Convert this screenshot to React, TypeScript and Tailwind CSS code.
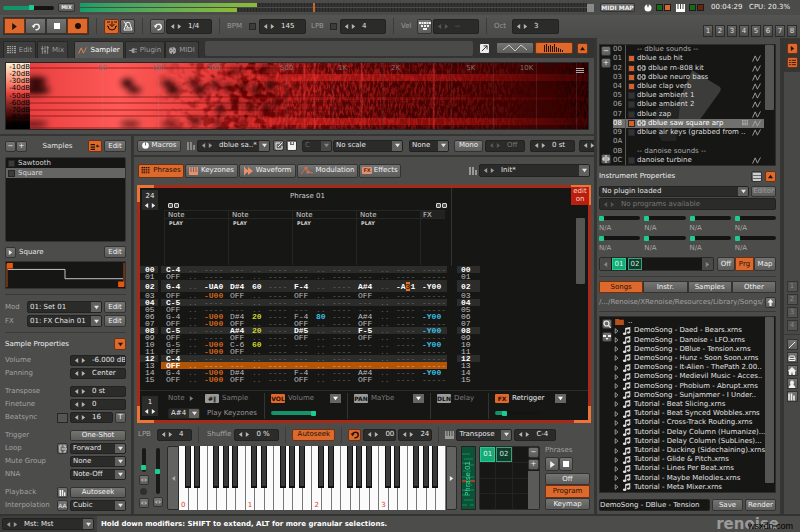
import type { ReactNode } from 'react';
import clsx, { type ClassValue } from 'clsx';
import { twMerge } from 'tailwind-merge';

function cn(...inputs: ClassValue[]) {
  return twMerge(clsx(inputs));
}

/* ---------- shared controls ---------- */

const box = 'border border-[#222] bg-[#2b2b2a] rounded-[2px] text-[#e6e6e6]';
const gray = 'bg-linear-to-b from-[#747473] to-[#5c5c5b] border border-[#333] text-[#f0f0f0]';
const orange = 'bg-[#dd6a2c] border border-[#6e3010] text-[#21130b]';

function Btn({
  children,
  className,
  on,
  label,
}: {
  children?: ReactNode;
  className?: string;
  on?: boolean;
  label?: string;
}) {
  return (
    <button
      aria-label={label}
      className={cn(
        'flex shrink-0 items-center justify-center overflow-hidden whitespace-nowrap rounded-[2px]',
        on ? orange : gray,
        className,
      )}
    >
      {children}
    </button>
  );
}

function Tri({ dir, className }: { dir: 'left' | 'right' | 'up' | 'down'; className?: string }) {
  const points = {
    left: '5,0 5,6 1,3',
    right: '1,0 1,6 5,3',
    up: '0,5 6,5 3,1',
    down: '0,1 6,1 3,5',
  };
  return (
    <svg viewBox="0 0 6 6" className={cn('h-[5px] w-[5px] shrink-0', className)} fill="currentColor">
      <polygon points={points[dir]} />
    </svg>
  );
}

function Spin({
  value,
  label,
  className,
  dim,
}: {
  value: string;
  label: string;
  className?: string;
  dim?: boolean;
}) {
  return (
    <div className={cn('flex shrink-0 items-center gap-[2px] overflow-hidden pl-[3px]', box, dim && 'text-[#777]', className)}>
      <button aria-label={`${label} down`} className={dim ? 'text-[#555]' : 'text-[#b5b5b5]'}>
        <Tri dir="left" />
      </button>
      <button aria-label={`${label} up`} className={dim ? 'text-[#555]' : 'text-[#b5b5b5]'}>
        <Tri dir="right" />
      </button>
      <input aria-label={label} defaultValue={value} className="ml-1 w-0 min-w-0 flex-1 bg-transparent outline-none" />
    </div>
  );
}

function Select({
  value,
  label,
  className,
  dim,
  arrows,
}: {
  value: string;
  label: string;
  className?: string;
  dim?: boolean;
  arrows?: boolean;
}) {
  return (
    <div className={cn('relative flex shrink-0 items-center overflow-hidden', box, dim && 'text-[#666]', className)}>
      {arrows && (
        <span className="flex gap-[2px] pl-[3px] text-[#999]">
          <Tri dir="left" />
          <Tri dir="right" />
        </span>
      )}
      <select
        aria-label={label}
        className={cn('h-full w-0 flex-1 appearance-none bg-transparent pl-[2px] pr-[11px] outline-none', arrows && 'pl-[6px]')}
      >
        <option>{value}</option>
      </select>
      <span
        className={cn(
          'pointer-events-none absolute inset-y-0 right-0 flex w-[10px] items-center justify-center bg-[#60605f]',
          dim && 'bg-[#484847] text-[#888]',
        )}
      >
        <Tri dir="down" />
      </span>
    </div>
  );
}

function Slider({ value, label, className }: { value: number; label: string; className?: string }) {
  return (
    <input
      type="range"
      aria-label={label}
      defaultValue={value}
      style={{ background: `linear-gradient(to right, #15936a ${value}%, #141414 ${value}%)` }}
      className={cn(
        'h-[4px] min-w-0 appearance-none rounded-[2px] [&::-webkit-slider-thumb]:h-[5px] [&::-webkit-slider-thumb]:w-[5px] [&::-webkit-slider-thumb]:appearance-none [&::-webkit-slider-thumb]:rounded-[1px] [&::-webkit-slider-thumb]:bg-[#1dcc95]',
        className,
      )}
    />
  );
}

function VSlider({ value, label, className }: { value: number; label: string; className?: string }) {
  return (
    <input
      type="range"
      aria-label={label}
      defaultValue={value}
      className={cn(
        'w-[4px] appearance-none rounded-[2px] bg-[#191919] [direction:rtl] [writing-mode:vertical-lr] [&::-webkit-slider-thumb]:h-[5px] [&::-webkit-slider-thumb]:w-[5px] [&::-webkit-slider-thumb]:appearance-none [&::-webkit-slider-thumb]:rounded-[1px] [&::-webkit-slider-thumb]:bg-[#1dcc95]',
        className,
      )}
    />
  );
}

function Check({ label, className }: { label: string; className?: string }) {
  return (
    <input
      type="checkbox"
      aria-label={label}
      className={cn('h-[7px] w-[7px] shrink-0 appearance-none border border-[#262626] bg-[#3c3c3b]', className)}
    />
  );
}

function Sep() {
  return <div className="h-[16px] w-px shrink-0 bg-[#3b3b3a]" />;
}

/* ---------- icons ---------- */

function LoopIcon({ className }: { className?: string }) {
  return (
    <svg viewBox="0 0 10 10" className={cn('h-[9px] w-[9px]', className)} fill="none" stroke="currentColor" strokeWidth="1.6">
      <path d="M5 8.600H6.200A2.800 2.800 0 0 0 6 2.400C4.600 2.400 3.300 3.100 2.800 4.600" />
      <path d="M0.600 4L2.900 7L5 4Z" fill="currentColor" stroke="none" />
    </svg>
  );
}

function Bars({ className }: { className?: string }) {
  return (
    <svg viewBox="0 0 8 8" className={cn('h-[8px] w-[8px] shrink-0', className)} fill="currentColor">
      <path d="M0 0h2v8H0zM3 0h2v8H3zM6 3h2v5H6z" />
    </svg>
  );
}

function KeysIcon({ className }: { className?: string }) {
  return (
    <svg viewBox="0 0 9 8" className={cn('h-[8px] w-[9px] shrink-0', className)} fill="currentColor">
      <path d="M0 0h1.500v5h1V0h1.500v5h1V0h1.500v5h1V0H9v8H0z" />
    </svg>
  );
}

function GridIcon({ className }: { className?: string }) {
  return (
    <svg viewBox="0 0 9 8" className={cn('h-[8px] w-[9px] shrink-0', className)} fill="currentColor">
      {[0, 2, 4, 6].map((y) => (
        <path key={y} d={`M0 ${y}h2v1.200H0zM2.500 ${y}h1.500v1.200H2.500zM4.700 ${y}h1.500v1.200H4.700zM7 ${y}h2v1.200H7z`} />
      ))}
    </svg>
  );
}

function WaveIcon({ className }: { className?: string }) {
  return (
    <svg viewBox="0 0 10 8" className={cn('h-[7px] w-[9px] shrink-0', className)} fill="none" stroke="currentColor">
      <path d="M0.500 7.500L3.500 1L6 7L9.500 0.500" />
    </svg>
  );
}

function NoteIcon() {
  return (
    <svg viewBox="0 0 9 9" className="h-[8px] w-[9px] shrink-0" fill="currentColor">
      <path d="M3 1.200L8.800 0V2L4.200 3V7.500H3zM7.600 1H8.800V6.500H7.600z" />
      <ellipse cx="2.400" cy="7.500" rx="2" ry="1.400" />
      <ellipse cx="6.800" cy="6.300" rx="1.800" ry="1.300" />
    </svg>
  );
}

/* ---------- top bars ---------- */

function Meter({ className }: { className: string }) {
  return (
    <div className="h-[4px] bg-[repeating-linear-gradient(to_right,#333_0_2px,#292929_2px_3px)]">
      <div className={cn('h-full bg-linear-to-r from-[#0f9f67] to-[#8bbb35]', className)} />
    </div>
  );
}

function TopBar() {
  return (
    <div className="flex h-[15px] items-center bg-[#4b4b4a] px-[3px]">
      <Slider label="Main volume" value={56} className="w-[51px]" />
      <Btn className="ml-1 h-[9px] w-[17px] text-[5px] font-bold">MIX</Btn>
      <div className="relative ml-[5px] flex flex-1 flex-col gap-px">
        <Meter className="w-[35%]" />
        <Meter className="w-[31%]" />
        <div className="absolute inset-y-0 left-[46%] w-[2px] bg-[#c8642c]" />
      </div>
      <div className="h-[8px] w-[7px] bg-[#8a8a89]" />
      <Btn className="ml-[6px] h-[9px] w-[35px] text-[6px] font-bold">MIDI MAP</Btn>
      <svg viewBox="0 0 8 8" className="ml-[9px] h-[8px] w-[8px] text-white" fill="currentColor">
        <circle cx="4" cy="4" r="3.500" />
        <path d="M4 4L3 0.500H5Z" fill="#333" />
      </svg>
      <span className="ml-1 h-[7px] w-[7px] border border-[#1c1c1c] bg-[#176b17]" />
      <span className="ml-px h-[7px] w-[7px] border border-[#1c1c1c] bg-[#dd662c]" />
      <KeysIcon className="ml-[5px] text-white" />
      <span className="ml-1 h-[7px] w-[7px] border border-[#1c1c1c] bg-[#176b17]" />
      <span className="ml-px h-[7px] w-[7px] border border-[#1c1c1c] bg-[#6b2412]" />
      <span className="ml-[7px] w-[38px] text-[#eee]">00:04:29</span>
      <span className="w-[48px] whitespace-nowrap text-[#eee]">CPU: 20.3%</span>
    </div>
  );
}

function Transport() {
  return (
    <div className="flex h-[23px] items-center bg-linear-to-b from-[#545453] to-[#4a4a49] px-[3px] pb-px text-[#9b9b9b]">
      <div className="flex h-[18px] border border-[#333]">
        <Btn label="Play" on className="w-[21px] rounded-none">
          <Tri dir="right" className="h-[7px] w-[7px]" />
        </Btn>
        <Btn label="Loop pattern" className="w-[21px] rounded-none">
          <LoopIcon />
        </Btn>
        <Btn label="Stop" className="w-[21px] rounded-none">
          <span className="h-[6px] w-[6px] bg-white" />
        </Btn>
        <Btn label="Record" on className="w-[21px] rounded-none">
          <span className="h-[6px] w-[6px] rounded-full bg-[#1b0f08]" />
        </Btn>
      </div>
      <div className="ml-[7px] flex items-center gap-[7px]">
        <Sep />
        <div className="flex gap-px">
          <Btn label="Follow" on className="h-[15px] w-[15px]">
            <svg viewBox="0 0 10 10" className="h-[10px] w-[10px]" fill="none" stroke="currentColor">
              <path d="M5 0V5M2.500 3L5 5.500L7.500 3M1 5Q1 9 5 9Q9 9 9 5M0 5L2 6M10 5L8 6M0 1H3M7 1H10" />
            </svg>
          </Btn>
          <Btn label="Metronome" className="h-[15px] w-[15px]">
            <svg viewBox="0 0 10 10" className="h-[10px] w-[10px]" fill="none" stroke="currentColor">
              <path d="M3.500 1.500H6.500L9 9H1ZM5.500 7L1 0.500M3 7H8" />
            </svg>
          </Btn>
        </div>
        <Sep />
        <div className="flex gap-px">
          <Btn label="Block loop" className="h-[15px] w-[15px]">
            <LoopIcon />
          </Btn>
          <Spin label="Block size" value="1/4" className="h-[15px] w-[46px]" />
        </div>
        <Sep />
        <div className="flex items-center">
          <span className="w-[22px]">BPM</span>
          <Check label="BPM lock" />
          <Spin label="BPM" value="145" className="ml-[3px] h-[15px] w-[47px]" />
          <span className="ml-[5px] w-[19px]">LPB</span>
          <Check label="LPB lock" />
          <Spin label="LPB" value="4" className="ml-[3px] h-[15px] w-[46px]" />
        </div>
        <Sep />
        <div className="flex items-center">
          <span className="w-[16px]">Vel</span>
          <Btn label="Velocity keyboard" className="h-[15px] w-[15px]">
            <svg viewBox="0 0 12 9" className="h-[9px] w-[12px]" fill="currentColor">
              <path d="M0 0h2v2H0zM2.500 0h2v2h-2zM5 0h2v2H5zM7.500 0h2v2h-2zM10 0h2v2h-2zM2 3h2v2H2zM5 3h2v2H5zM8 3h2v2H8zM4 6h4v2H4z" />
            </svg>
          </Btn>
          <Spin label="Velocity" value="--" dim className="ml-px h-[15px] w-[46px]" />
        </div>
        <Sep />
        <div className="flex items-center">
          <span className="w-[18px]">Oct</span>
          <Spin label="Octave" value="3" className="h-[15px] w-[47px]" />
        </div>
      </div>
      <div className="ml-auto flex gap-[2px] self-end">
        {[1, 2, 3, 4, 5, 6, 7, 8].map((n) => (
          <button
            key={n}
            className="h-[12px] w-[10px] border border-[#2c2c2c] bg-linear-to-b from-[#656564] to-[#4a4a49] leading-[10px] text-[#ddd]"
          >
            {n}
          </button>
        ))}
      </div>
    </div>
  );
}

function ModeTabs() {
  const tab = 'flex h-[17px] items-center justify-center gap-[3px] rounded-t-[2px] border border-[#262626] border-b-0';
  const idle = 'bg-[#3e3e3d] text-[#9c9c9c]';
  return (
    <div className="flex h-[20px] items-end bg-[#333332] px-[3px]">
      <button className={cn(tab, idle, 'w-[33px]')}>
        <GridIcon />
        Edit
      </button>
      <button className={cn(tab, idle, 'ml-px w-[31px]')}>
        <svg viewBox="0 0 9 9" className="h-[8px] w-[8px]" stroke="currentColor">
          <path d="M1.500 0V9M4.500 0V9M7.500 0V9M0 3H3M3 6H6M6 2H9" />
        </svg>
        Mix
      </button>
      <button className={cn(tab, 'ml-[6px] w-[50px] bg-[#5a5a59] text-white')}>
        <WaveIcon className="text-[#e98a62]" />
        Sampler
      </button>
      <button className={cn(tab, idle, 'ml-px w-[40px]')}>
        <svg viewBox="0 0 9 8" className="h-[7px] w-[8px]" fill="currentColor">
          <path d="M0 3.500H2.500Q3 1 6 1V0.500L6 2H9V3H6V5H9V6H6V7Q3 7 2.500 4.500H0z" />
        </svg>
        Plugin
      </button>
      <button className={cn(tab, idle, 'w-[34px]')}>
        <svg viewBox="0 0 8 8" className="h-[7px] w-[7px]">
          <circle cx="4" cy="4" r="4" fill="#a8a8a8" />
          <path d="M1.500 4h1M5.500 4h1M3.500 2h1M3.500 0v1.500M4 6v2" stroke="#333" />
        </svg>
        MIDI
      </button>
      <div className="mb-[2px] ml-[6px] h-[15px] flex-1 rounded-[2px] bg-[#4a4a49]" />
      <div className="mb-[4px] ml-[6px] flex items-center">
        <Btn label="Detach" className="h-[11px] w-[11px] bg-none bg-[#eee] text-[#222]">
          <svg viewBox="0 0 8 8" className="h-[7px] w-[7px]" fill="none" stroke="currentColor">
            <path d="M1 7L7 1M3 1H7V5" />
          </svg>
        </Btn>
        <Btn label="Scope view" className="ml-[6px] h-[12px] w-[38px] text-[#ccc]">
          <svg viewBox="0 0 24 8" className="h-[8px] w-[24px]" fill="none" stroke="currentColor">
            <path d="M0 6L6 1L12 7L18 1L24 6" />
          </svg>
        </Btn>
        <Btn label="Spectrum view" on className="ml-px h-[12px] w-[38px]">
          <svg viewBox="0 0 20 8" className="h-[8px] w-[20px]" fill="currentColor">
            <path d="M0 1h1v7H0zM2 0h1v8H2zM4 2h1v6H4zM6 1h1v7H6zM8 2h1v6H8zM10 0h1v8h-1zM12 3h1v5h-1zM14 4h1v4h-1zM16 5h1v3h-1zM18 6h1v2h-1z" />
          </svg>
        </Btn>
        <Btn label="Collapse" on className="ml-1 mr-[3px] h-[11px] w-[11px]">
          <Tri dir="up" />
        </Btn>
      </div>
    </div>
  );
}

/* ---------- spectrum ---------- */

const freqs = [
  { label: '50', at: 13 },
  { label: '100', at: 23 },
  { label: '200', at: 33 },
  { label: '500', at: 46 },
  { label: '1K', at: 56 },
  { label: '2K', at: 65.5 },
  { label: '5K', at: 79 },
  { label: '10K', at: 89 },
];

// dark spots between the partials: cx, cy, rx, ry
const blobs = [
  [6, 18, 11, 4], [6, 27, 14, 4], [97, 20, 6, 4], [104, 27, 7, 3], [137, 20, 6, 3], [143, 27, 7, 4], [163, 20, 5, 3],
  [170, 27, 6, 4], [185, 22, 4, 4], [198, 25, 4, 4], [212, 24, 4, 4], [226, 27, 4, 5], [240, 22, 4, 6],
  [4, 61, 14, 2], [100, 61, 10, 2], [140, 61, 9, 2], [165, 58, 6, 3], [190, 46, 5, 4], [205, 40, 4, 4],
  [220, 44, 4, 4], [236, 46, 4, 5], [246, 38, 4, 3], [188, 60, 5, 3], [212, 60, 5, 3], [235, 6, 8, 2], [205, 9, 8, 2],
];

function Spectrum() {
  return (
    <div className="bg-[#4c4c4b] px-[5px] py-1">
      <div className="flex border border-[#262626]">
        <div className="flex w-[24px] flex-col justify-between bg-linear-to-b from-[#fff0d4] via-[#e84540] via-45% to-black py-px text-right leading-[7px] text-black">
          {[10, 20, 30, 40, 50, 60, 70, 80, 90].map((db) => (
            <span key={db}>-{db}dB</span>
          ))}
        </div>
        <div className="relative h-[66px] flex-1 overflow-hidden bg-black">
          <svg viewBox="0 0 557 66" preserveAspectRatio="none" className="h-full w-full">
            <defs>
              <linearGradient id="base">
                <stop offset="0" stopColor="#e84040" />
                <stop offset="0.160" stopColor="#ff5a57" />
                <stop offset="0.350" stopColor="#e23836" />
                <stop offset="0.500" stopColor="#c8201e" />
                <stop offset="0.750" stopColor="#b01614" />
                <stop offset="1" stopColor="#7a0c0a" />
              </linearGradient>
              <linearGradient id="fadeMid">
                <stop offset="0.220" stopColor="#000" />
                <stop offset="0.400" stopColor="#fff" />
                <stop offset="0.500" stopColor="#555" />
                <stop offset="1" stopColor="#222" />
              </linearGradient>
              <linearGradient id="fadeHigh">
                <stop offset="0.350" stopColor="#000" />
                <stop offset="0.550" stopColor="#bbb" />
                <stop offset="0.800" stopColor="#fff" />
              </linearGradient>
              <linearGradient id="dark">
                <stop offset="0.400" stopColor="#000" stopOpacity="0" />
                <stop offset="0.600" stopColor="#000" stopOpacity="0.200" />
                <stop offset="0.850" stopColor="#000" stopOpacity="0.450" />
                <stop offset="1" stopColor="#000" stopOpacity="0.800" />
              </linearGradient>
              <linearGradient id="band">
                <stop offset="0.300" stopColor="#f02a26" stopOpacity="0" />
                <stop offset="0.500" stopColor="#f02a26" stopOpacity="0.500" />
                <stop offset="0.800" stopColor="#e01a16" stopOpacity="0.350" />
                <stop offset="1" stopColor="#c01010" stopOpacity="0.100" />
              </linearGradient>
              <mask id="midMask">
                <rect width="557" height="66" fill="url(#fadeMid)" />
              </mask>
              <mask id="highMask">
                <rect width="557" height="66" fill="url(#fadeHigh)" />
              </mask>
              <filter id="soft">
                <feGaussianBlur stdDeviation="3" />
              </filter>
              <filter id="cells" x="0" y="0" width="1" height="1">
                <feTurbulence type="fractalNoise" baseFrequency="0.110 0.130" numOctaves="2" seed="4" />
                <feColorMatrix values="0 0 0 0 0.120  0 0 0 0 0  0 0 0 0 0  5 0 0 0 -2.300" />
              </filter>
              <filter id="grain" x="0" y="0" width="1" height="1">
                <feTurbulence type="fractalNoise" baseFrequency="0.450 0.160" numOctaves="3" seed="9" />
                <feColorMatrix values="0 0 0 0 0.050  0 0 0 0 0  0 0 0 0 0  5 0 0 0 -1.900" />
              </filter>
            </defs>
            <rect width="557" height="66" fill="url(#base)" />
            {[4, 33, 39, 46, 52, 64].map((y) => (
              <rect key={y} y={y} width="557" height="2" fill="#7a0c0c" opacity="0.350" />
            ))}
            <g filter="url(#soft)" fill="#160000">
              {blobs.map(([cx, cy, rx, ry], i) => (
                <ellipse key={i} cx={cx} cy={cy} rx={rx} ry={ry} />
              ))}
            </g>
            <g mask="url(#midMask)">
              <rect width="557" height="66" filter="url(#cells)" />
            </g>
            <rect width="557" height="66" fill="url(#dark)" />
            <g mask="url(#highMask)">
              <rect width="557" height="66" filter="url(#grain)" />
            </g>
            <rect y="11" width="557" height="7" fill="url(#band)" />
            <rect y="34" width="557" height="3" fill="url(#band)" opacity="0.500" />
            <rect y="55" width="557" height="7" fill="url(#band)" />
            {[273, 283, 330, 402].map((x) => (
              <rect key={x} x={x} width="2" height="66" fill="#ff4a44" opacity="0.300" />
            ))}
            {[72, 128, 256, 302, 352, 420, 462, 505, 545].map((x) => (
              <rect key={x} x={x} width="1" height="66" fill="#aaa" opacity="0.150" />
            ))}
          </svg>
          {freqs.map(({ label, at }) => (
            <span key={label} className="absolute top-px -translate-x-1/2 text-[#7c7272]" style={{ left: `${at}%` }}>
              {label}
            </span>
          ))}
          <button aria-label="Spectrum options" className="absolute right-[4px] top-[5px] flex flex-col gap-px">
            <span className="h-px w-[8px] bg-[#aaa]" />
            <span className="h-px w-[8px] bg-[#aaa]" />
            <span className="h-px w-[8px] bg-[#aaa]" />
          </button>
        </div>
      </div>
    </div>
  );
}

/* ---------- samples panel ---------- */

function Prop({ label, children }: { label: string; children: ReactNode }) {
  return (
    <div className="flex h-[11px] items-center justify-between">
      <span className="text-[#a2a2a2]">{label}</span>
      <div className="flex items-center gap-[2px]">{children}</div>
    </div>
  );
}

function SamplesPanel() {
  const field = 'h-[11px] w-[56px]';
  return (
    <aside className="flex w-[131px] shrink-0 flex-col bg-[#4c4c4b] px-[5px] pt-1">
      <div className="flex h-[12px] items-center">
        <Btn label="Remove sample" className="h-[11px] w-[11px]">−</Btn>
        <Btn label="Add sample" className="h-[11px] w-[11px]">+</Btn>
        <span className="flex-1 text-center text-[#e4e4e4]">Samples</span>
        <Btn label="Drumkit" on className="h-[12px] w-[14px]">
          <svg viewBox="0 0 10 8" className="h-[7px] w-[10px]" fill="currentColor">
            <path d="M0 1h5v1.500H0zM0 4h5v1.500H0zM0 6.500h5V8H0zM6 3.500L8 1.500V3h2v1.200H8V5.500z" />
          </svg>
        </Btn>
        <Btn className="ml-[2px] h-[12px] w-[22px]">Edit</Btn>
      </div>
      <ul className="mt-[5px] h-[85px] rounded-[2px] border border-[#333] bg-[#161615] text-[#d6d6d6]">
        <li className="flex h-[10px] items-center gap-[3px] px-[2px]">
          <Check label="Mute Sawtooth" />
          Sawtooth
        </li>
        <li className="flex h-[10px] items-center gap-[3px] bg-[#656564] px-[2px]">
          <Check label="Mute Square" />
          Square
        </li>
      </ul>
      <div className="mt-1 flex h-[12px] items-center">
        <Btn label="Play sample" className="h-[11px] w-[11px]">
          <Tri dir="right" />
        </Btn>
        <span className="flex-1 pl-[3px] text-[#e4e4e4]">Square</span>
        <Btn className="h-[12px] w-[22px]">Edit</Btn>
      </div>
      <svg viewBox="0 0 121 28" preserveAspectRatio="none" className="mt-[3px] h-[28px] w-full border border-[#333] bg-[#161615]" fill="none">
        <path d="M1.500 8H60V18H119" stroke="#ccc" />
        <path d="M1 2V27M120 1V26" stroke="#c4501a" />
        <path d="M1 1h6v6H1zM114 21h6v6h-6z" fill="#e8560c" />
      </svg>
      <div className="mt-[5px] h-px bg-[#3a3a39]" />
      <div className="mt-[6px] flex h-[12px] items-center gap-[2px]">
        <span className="flex-1 text-[#a2a2a2]">Mod</span>
        <Select label="Modulation set" value="01: Set 01" className="h-[12px] w-[75px]" />
        <Btn className="h-[12px] w-[22px]">Edit</Btn>
      </div>
      <div className="mt-[2px] flex h-[12px] items-center gap-[2px]">
        <span className="flex-1 text-[#a2a2a2]">FX</span>
        <Select label="FX chain" value="01: FX Chain 01" className="h-[12px] w-[75px]" />
        <Btn className="h-[12px] w-[22px]">Edit</Btn>
      </div>
      <div className="mt-[5px] h-px bg-[#3a3a39]" />
      <div className="mt-[5px] flex h-[12px] items-center justify-between">
        <h2 className="text-[#eee]">Sample Properties</h2>
        <Btn label="Collapse sample properties" on className="h-[12px] w-[12px]">
          <Tri dir="down" />
        </Btn>
      </div>
      <div className="mt-[5px] flex flex-col gap-[7px]">
        <div className="flex flex-col gap-[2px]">
          <Prop label="Volume"><Spin label="Volume" value="-6.000 dB" className={field} /></Prop>
          <Prop label="Panning"><Spin label="Panning" value="Center" className={field} /></Prop>
        </div>
        <div className="flex flex-col gap-[2px]">
          <Prop label="Transpose"><Spin label="Transpose" value="0 st" className={field} /></Prop>
          <Prop label="Finetune"><Spin label="Finetune" value="0" className={field} /></Prop>
          <Prop label="Beatsync">
            <Check label="Beatsync on" className="h-[10px] w-[11px] bg-[#555]" />
            <Spin label="Beatsync" value="16" className="h-[11px] w-[43px]" />
            <Btn className="h-[11px] w-[11px]">T</Btn>
          </Prop>
        </div>
        <div className="flex flex-col gap-[2px]">
          <Prop label="Trigger"><Btn className={field}>One-Shot</Btn></Prop>
          <Prop label="Loop">
            <Btn label="Loop release" className="h-[11px] w-[11px]">
              <svg viewBox="0 0 9 9" className="h-[8px] w-[8px]" fill="none" stroke="currentColor">
                <path d="M3 1H1V8H3M5 1H7V3M5 8H7V6M3 4.500H9" />
              </svg>
            </Btn>
            <Select label="Loop" value="Forward" className={field} />
          </Prop>
          <Prop label="Mute Group"><Select label="Mute group" value="None" className={field} /></Prop>
          <Prop label="NNA"><Select label="NNA" value="Note-Off" className={field} /></Prop>
        </div>
        <div className="flex flex-col gap-[2px]">
          <Prop label="Playback">
            <Btn label="Oversampling" className="h-[11px] w-[11px]"><Bars className="h-[6px] w-[7px]" /></Btn>
            <Btn className={field}>Autoseek</Btn>
          </Prop>
          <Prop label="Interpolation">
            <Btn className="h-[11px] w-[11px] text-[6px]">AA</Btn>
            <Select label="Interpolation" value="Cubic" className={field} />
          </Prop>
        </div>
      </div>
    </aside>
  );
}

/* ---------- phrase editor ---------- */

type Cell = [note?: string, vol?: string, fx?: string];
type Line = { cells: Cell[]; fx?: string };

const lines: Line[] = [
  { cells: [['C-4'], [], [], []] },
  { cells: [['OFF'], [], [], []] },
  { cells: [['G-4', '', '-UA0'], ['D#4', '60'], ['F-4'], ['A#4', '', '-A31']], fx: '-Y00' },
  { cells: [['OFF', '', '-U00'], ['OFF'], ['OFF'], ['OFF']] },
  { cells: [['C-5'], [], [], []] },
  { cells: [['OFF'], [], [], []] },
  { cells: [['G-4', '', '-U00'], ['D#4', '20'], ['F-4', '80'], ['A#4']], fx: '-Y00' },
  { cells: [['OFF', '', '-U00'], ['OFF'], ['OFF'], ['OFF']] },
  { cells: [['C-5'], ['A#4', '20'], ['D#5'], ['F-5']], fx: '-Y00' },
  { cells: [['OFF'], ['OFF'], ['OFF'], ['OFF']] },
  { cells: [['G-5', '', '-U00'], ['C-6', '60'], [], []], fx: '-Y00' },
  { cells: [['OFF', '', '-U00'], ['OFF'], [], []] },
  { cells: [['C-4'], [], [], []] },
  { cells: [['OFF'], [], [], []] },
  { cells: [['G-4', '', '-U00'], ['D#4'], ['F-4'], ['A#4']], fx: '-Y00' },
  { cells: [['OFF', '', '-U00'], ['OFF'], ['OFF'], ['OFF']] },
];

const CURRENT = 2;
const PLAYING = 13;

function PatternLine({ line, index }: { line: Line; index: number }) {
  const beat = index % 4 === 0;
  const current = index === CURRENT;
  const playing = index === PLAYING;
  const strong = beat || current;
  const num = String(index).padStart(2, '0');
  const empty = playing ? 'font-normal text-[#e0a878]' : 'font-normal text-[#666665]';
  const noteColor = strong || playing ? 'font-bold text-white' : 'text-[#bcbcbb]';
  const numCell = cn('p-0', strong ? 'bg-[#2c2c2b] font-bold text-white' : 'text-[#c0c0c0]');
  const gap = cn('p-0', (strong || playing) && 'bg-[#161615]');
  return (
    <tr className={cn('h-[7px]', current && 'h-[12px] bg-[#2a2a29]', beat && 'bg-[#2c2c2b]', playing && 'bg-[#b35505]')}>
      <td className={cn(numCell, 'pl-[5px]', playing && 'bg-[#161615]')}>{num}</td>
      <td className={gap} />
      <td className="p-0" />
      {line.cells.map(([note, vol, fx], i) => (
        <PatternCell
          key={i}
          note={note}
          vol={vol}
          fx={fx}
          empty={empty}
          noteColor={noteColor}
          current={current}
          volColor={current ? 'text-white' : i === 2 ? 'text-[#3cc0e4]' : 'text-[#d2d22c]'}
        />
      ))}
      <td className={cn('p-0', line.fx ? (current ? 'font-bold text-white' : 'font-bold text-[#3cc0e4]') : empty)}>
        {line.fx ?? '-----'}
      </td>
      <td className={gap} />
      <td className={cn(numCell, 'pl-1', playing && 'bg-[#161615]')}>{num}</td>
    </tr>
  );
}

function PatternCell({
  note,
  vol,
  fx,
  empty,
  noteColor,
  current,
  volColor,
}: {
  note?: string;
  vol?: string;
  fx?: string;
  empty: string;
  noteColor: string;
  current: boolean;
  volColor: string;
}) {
  return (
    <>
      <td className={cn('p-0', note ? noteColor : empty)}>{note ?? '---'}</td>
      <td className={cn('p-0', vol ? ['font-bold', volColor] : empty)}>{vol || '..'}</td>
      <td className={cn('p-0', fx ? ['font-bold', current ? 'text-white' : 'text-[#d0641e]'] : empty)}>
        {fx === '-A31' ? (
          <>
            -A<span className="bg-[#e87428] text-[#402008]">3</span>1
          </>
        ) : (
          (fx ?? '----')
        )}
      </td>
    </>
  );
}

function PatternCols() {
  return (
    <>
      <col className="w-[22px]" />
      <col className="w-[16px]" />
      <col className="w-[26px]" />
    </>
  );
}

function LinkToggle() {
  return (
    <span className="flex gap-px">
      <span className="h-[5px] w-[5px] rounded-[1px] border border-[#d8d8d8] bg-[#555]" />
      <span className="h-[5px] w-[5px] rounded-[1px] border border-[#d8d8d8] bg-[#555]" />
    </span>
  );
}

function CountBox({ value, label }: { value: string; label: string }) {
  return (
    <div className="flex h-[20px] w-[16px] flex-col items-center justify-between bg-[#2b2b2a] py-[2px] text-[#eee]">
      <span>{value}</span>
      <div className="flex gap-[2px]">
        <button aria-label={`${label} down`}><Tri dir="left" /></button>
        <button aria-label={`${label} up`}><Tri dir="right" /></button>
      </div>
    </div>
  );
}

function Chip({ children, on }: { children: ReactNode; on?: boolean }) {
  return (
    <button
      className={cn(
        'h-[9px] w-[14px] rounded-[1px] text-center text-[6px] font-bold leading-[9px]',
        on ? 'bg-[#e0682a] text-[#2a1006]' : 'bg-[#9a9a99] text-[#111]',
      )}
    >
      {children}
    </button>
  );
}

function DropBtn({ label }: { label: string }) {
  return (
    <button aria-label={label} className="ml-auto flex h-[9px] w-[11px] items-center justify-center bg-[#656564] text-white">
      <Tri dir="down" />
    </button>
  );
}

function PhraseEditor() {
  const fxCol = 'flex h-[26px] flex-col justify-between border-r border-[#333] px-[6px]';
  const fxHead = 'flex h-[11px] items-center gap-[3px]';
  return (
    <section className="relative mx-[3px] h-[238px] border-[3px] border-[#a72a17] bg-[#161615]">
      {/* bright corner brackets over the frame */}
      <span className="absolute -left-[3px] -top-[3px] h-[17px] w-[17px] border-l-[3px] border-t-[3px] border-[#ee7436]" />
      <span className="absolute -bottom-[3px] -left-[3px] h-[17px] w-[17px] border-b-[3px] border-l-[3px] border-[#ee7436]" />
      <span className="absolute -bottom-[3px] -right-[3px] h-[17px] w-[17px] border-b-[3px] border-r-[3px] border-[#ee7436]" />
      <span className="absolute -right-[3px] -top-[3px] z-10 h-[20px] w-[20px] border-r-[2px] border-t-[2px] border-[#ee7436] bg-[#bb1e0c] text-center leading-[8px] text-[#f5d8d0]">
        edit
        <br />
        on
      </span>

      <div className="flex h-full flex-col">
        <div className="flex h-[78px]">
          <div className="w-[24px] shrink-0 pl-[2px] pt-[2px]">
            <CountBox label="Columns" value="24" />
          </div>
          <div className="w-[288px] border-r border-[#333]">
            <p className="pt-1 text-center text-[#d0d0d0]">Phrase 01</p>
            <div className="flex h-[9px] items-center justify-between px-1">
              <LinkToggle />
              <LinkToggle />
            </div>
            <div className="flex">
              {['Note', 'Note', 'Note', 'Note'].map((name, i) => (
                <div key={i} className="h-[55px] w-[64px] border-l border-[#242423] text-[#d0d0d0]">
                  <div className="h-[9px] border-y border-[#262625] pl-[3px] leading-[8px]">{name}</div>
                  <div className="pl-1 text-[5px] font-bold leading-[8px]">PLAY</div>
                </div>
              ))}
              <div className="h-[55px] flex-1 border-l border-[#242423] text-[#d0d0d0]">
                <div className="mr-[6px] h-[9px] border-y border-[#262625] bg-[#222] pl-[2px] leading-[8px]">FX</div>
              </div>
            </div>
          </div>
        </div>
        <table className="w-[340px] table-fixed [font-family:'Liberation_Mono',monospace] text-[8px] leading-[7px]">
          <colgroup>
            <col className="w-[18px]" />
            <col className="w-[3px]" />
            <col className="w-[5px]" />
            {[0, 1, 2, 3].map((i) => (
              <PatternCols key={i} />
            ))}
            <col className="w-[25px]" />
            <col className="w-[10px]" />
            <col className="w-[23px]" />
          </colgroup>
          <tbody>
            {lines.map((line, i) => (
              <PatternLine key={i} line={line} index={i} />
            ))}
          </tbody>
        </table>
        <div className="mt-auto flex h-[30px] items-center border-t border-[#2c2c2b] text-[#7c7c7b]">
          <div className="w-[22px] pl-[2px]">
            <CountBox label="Effect columns" value="1" />
          </div>
          <div className={cn(fxCol, 'w-[103px]')}>
            <div className={fxHead}>
              <span className="w-[18px]">Note</span>
              <Tri dir="right" />
              <span className="ml-[8px] flex"><Chip>#‖</Chip></span>
              Sample
            </div>
            <div className={fxHead}>
              <Select label="Base note" value="A#4" className="h-[11px] w-[32px]" />
              <span className="ml-1 whitespace-nowrap text-[#999]">Play Keyzones</span>
            </div>
          </div>
          <div className={cn(fxCol, 'w-[83px]')}>
            <div className={fxHead}>
              <Chip on>VOL</Chip>
              Volume
              <DropBtn label="Volume options" />
            </div>
            <div className={fxHead}><Slider label="Phrase volume" value={98} className="w-[46px]" /></div>
          </div>
          <div className={cn(fxCol, 'w-[83px]')}>
            <div className={fxHead}>
              <Chip>PAN</Chip>
              MaYbe
              <DropBtn label="Pan options" />
            </div>
          </div>
          <div className={cn(fxCol, 'w-[58px]')}>
            <div className={fxHead}>
              <Chip>DLN</Chip>
              Delay
            </div>
          </div>
          <div className="flex h-[26px] w-[83px] flex-col justify-between px-[6px]">
            <div className={cn(fxHead, 'text-[#eee]')}>
              <Chip on>FX</Chip>
              Retrigger
              <DropBtn label="FX options" />
            </div>
            <div className={fxHead}><Slider label="Retrigger amount" value={18} className="w-[46px]" /></div>
          </div>
        </div>
      </div>
      <div className="absolute right-[3px] top-[30px] h-[66px] w-[9px] rounded-[1px] bg-[#555554]" />
    </section>
  );
}

function InstrumentToolbar() {
  return (
    <div className="flex h-[21px] items-center overflow-hidden border-b-2 border-[#353534] pl-[3px]">
      <Btn className="h-[12px] w-[44px] gap-[3px]">
        <svg viewBox="0 0 8 8" className="h-[7px] w-[7px]">
          <circle cx="4" cy="4" r="3.800" fill="#fff" />
          <path d="M4 4V0.500" stroke="#555" />
        </svg>
        Macros
      </Btn>
      <Bars className="ml-[6px] mr-[2px] text-[#888]" />
      <Select label="Instrument preset" value="dblue sa..*" arrows className="h-[12px] w-[73px]" />
      <Btn label="Rename" className="ml-[3px] h-[11px] w-[11px]">
        <svg viewBox="0 0 8 8" className="h-[8px] w-[8px]" fill="none" stroke="currentColor">
          <path d="M5 1H1V7H7V4M3 5L7.500 0.500" />
        </svg>
      </Btn>
      <Btn label="Save preset" className="ml-[2px] h-[11px] w-[11px]">
        <svg viewBox="0 0 8 8" className="h-[8px] w-[8px]" fill="currentColor">
          <path d="M0 0h2v3h4V0h2v8H0zM3.500 0h1.500v2H3.500z" />
        </svg>
      </Btn>
      <Select label="Scale key" value="C" dim className="ml-[5px] h-[12px] w-[30px]" />
      <Select label="Scale" value="No scale" className="ml-px h-[12px] w-[70px]" />
      <Select label="Trigger options" value="None" className="ml-[6px] h-[12px] w-[40px]" />
      <Btn className="ml-[5px] h-[12px] w-[29px]">Mono</Btn>
      <Spin label="Glide" value="Off" dim className="ml-[2px] h-[12px] w-[40px]" />
      <Spin label="Transpose" value="0 st" className="ml-[5px] h-[12px] w-[45px]" />
      <Spin label="Volume" value="" className="ml-1 h-[12px] w-[45px]" />
    </div>
  );
}

function EditorTabs() {
  const icon = 'text-[#e8906c]';
  return (
    <div className="flex h-[28px] items-center px-[4px] pb-px">
      <div className="flex gap-px">
        <Btn on className="h-[14px] w-[46px] gap-[3px]">
          <GridIcon className="h-[7px]" />
          Phrases
        </Btn>
        <Btn className="h-[14px] w-[53px] gap-[3px]">
          <KeysIcon className={icon} />
          Keyzones
        </Btn>
        <Btn className="h-[14px] w-[57px] gap-[3px]">
          <svg viewBox="0 0 9 8" className={cn('h-[8px] w-[9px]', icon)} fill="currentColor">
            <path d="M0 0h1v8H0zM1 1L5 4L1 7zM4 0L9 4L4 8z" />
          </svg>
          Waveform
        </Btn>
        <Btn className="h-[14px] w-[61px] gap-[3px]">
          <svg viewBox="0 0 12 8" className="h-[8px] w-[12px] text-[#d07050]" fill="none" stroke="currentColor">
            <path d="M0 7L5 1L7 5L12 6" />
            <path d="M4 0h2v2H4zM6 4h2v2H6z" fill="currentColor" />
          </svg>
          Modulation
        </Btn>
        <Btn className="h-[14px] w-[42px] gap-[2px]">
          <span className="rounded-[1px] bg-[#e8906c] px-px text-[5px] font-bold leading-[7px] text-[#5a3020]">FX</span>
          Effects
        </Btn>
      </div>
      <Bars className="ml-auto mr-[2px] text-[#999]" />
      <Select label="Phrase preset" value="Init*" arrows className="h-[13px] w-[111px]" />
    </div>
  );
}

function PhraseControls() {
  return (
    <div className="flex h-[23px] items-center gap-[6px] px-1 text-[#a2a2a2]">
      <span className="flex items-center">
        <span className="w-[19px]">LPB</span>
        <Spin label="Phrase LPB" value="4" className="h-[12px] w-[35px]" />
      </span>
      <Sep />
      <span className="flex items-center gap-[3px] pl-[2px]">
        <span>Shuffle</span>
        <Spin label="Shuffle" value="0 %" className="h-[12px] w-[45px]" />
      </span>
      <Sep />
      <Btn on className="h-[12px] w-[43px]">Autoseek</Btn>
      <Sep />
      <span className="flex items-center gap-[2px]">
        <Btn label="Phrase loop" on className="h-[12px] w-[13px]"><LoopIcon /></Btn>
        <Spin label="Loop start" value="00" className="h-[12px] w-[33px]" />
        <Spin label="Loop end" value="24" className="h-[12px] w-[34px]" />
      </span>
      <Sep />
      <span className="flex items-center gap-[2px]">
        <KeysIcon className="text-[#999]" />
        <Select label="Key tracking" value="Transpose" className="h-[12px] w-[56px]" />
        <Spin label="Base note" value="C-4" className="h-[12px] w-[42px]" />
      </span>
    </div>
  );
}

/* ---------- keyboard ---------- */

function Piano() {
  return (
    <div className="flex min-w-0 flex-1 overflow-hidden bg-[#1a1a1a]">
      {Array.from({ length: 28 }, (_, i) => {
        const step = i % 7;
        return (
          <div key={i} className="relative h-full flex-1">
            <button
              aria-label={`White key ${i + 1}`}
              className="flex h-full w-full items-end border-r border-[#777] bg-[#fbfbfb] pl-[2px] text-[#e0412c]"
            >
              {step === 0 ? i / 7 : ''}
            </button>
            {step !== 2 && step !== 6 && (
              <button
                aria-label={`Black key ${i + 1}`}
                className="absolute -right-[2px] top-0 z-10 h-[42px] w-[6px] border-x border-b-2 border-[#111] bg-[#3a3a3a]"
              />
            )}
          </div>
        );
      })}
    </div>
  );
}

function SmallArrows() {
  return (
    <Btn label="Adjust" className="h-[10px] w-[10px] text-[#aaa]">
      <Tri dir="left" className="h-[4px] w-[4px]" />
      <Tri dir="right" className="h-[4px] w-[4px]" />
    </Btn>
  );
}

function KeyboardRow() {
  return (
    <div className="flex h-[64px] px-1">
      <div className="flex w-[29px] justify-between pr-[4px]">
        <div className="flex w-[11px] flex-col items-center gap-[3px] pt-[2px]">
          <VSlider label="Pitch bend" value={8} className="h-[24px]" />
          <SmallArrows />
          <span className="h-[7px] w-[7px] rounded-full bg-[#2f2f2e]" />
          <SmallArrows />
        </div>
        <div className="flex w-[11px] flex-col items-center justify-between pb-[3px] pt-[2px]">
          <VSlider label="Modulation wheel" value={50} className="h-[46px]" />
          <SmallArrows />
        </div>
      </div>
      <button aria-label="Octave down" className="flex w-[12px] items-center justify-center rounded-l-[2px] border border-[#2a2a2a] bg-[#626261] text-[#aaa]">
        <Tri dir="left" />
      </button>
      <Piano />
      <button aria-label="Octave up" className="flex w-[11px] items-center justify-center rounded-r-[2px] border border-[#2a2a2a] bg-[#626261] text-[#eee]">
        <Tri dir="right" />
      </button>
      <div className="relative ml-1 flex w-[15px] items-center justify-center border border-[#222] bg-[#0c5236]">
        <svg viewBox="0 0 13 62" preserveAspectRatio="none" className="absolute inset-0 h-full w-full">
          <path d="M0 7h8M2 12h9M0 16h3M6 18h6M1 24h8M0 30h12M4 38h6M0 43h12M0 48h4M2 53h9M0 58h5M8 58h4" stroke="#178a60" />
          <path d="M0 34h5M8 34h5" stroke="#c2451c" strokeWidth="1.500" />
        </svg>
        <span className="relative rotate-180 whitespace-nowrap text-[#3fe0a8] [writing-mode:vertical-rl]">Phrase 01</span>
      </div>
      <div className="ml-[3px] flex w-[61px] rounded-[2px] border border-[#2a2a2a] bg-[#1a1a19]">
        <div className="grid flex-1 grid-cols-3 grid-rows-4 gap-px bg-[#232322]">
          <button className="border border-[#1fcf8f] bg-[#1aa878] text-[#d8ffe8]">01</button>
          <button className="border border-[#3f9f7a] bg-[#103c2e] text-[#cfe8dc]">02</button>
          {Array.from({ length: 10 }, (_, i) => (
            <span key={i} className="bg-[#171716]" />
          ))}
        </div>
        <div className="flex w-[11px] flex-col gap-px">
          <Btn label="Remove phrase" className="h-[11px] w-[11px]">−</Btn>
          <Btn label="Add phrase" className="h-[11px] w-[11px]">+</Btn>
          <span className="flex-1 bg-[#5a5a59]" />
        </div>
      </div>
      <div className="ml-[5px] flex w-[45px] flex-col justify-between">
        <span className="text-[#a2a2a2]">Phrases</span>
        <div className="flex">
          <Btn label="Play phrase" className="h-[14px] w-[14px]"><Tri dir="right" className="h-[7px] w-[7px]" /></Btn>
          <Btn label="Stop phrase" className="h-[14px] w-[14px]"><span className="h-[6px] w-[6px] bg-white" /></Btn>
        </div>
        <div className="flex flex-col">
          <Btn className="h-[12px]">Off</Btn>
          <Btn on className="h-[13px] rounded-none">Program</Btn>
          <Btn className="h-[12px]">Keymap</Btn>
        </div>
      </div>
    </div>
  );
}

/* ---------- right side ---------- */

type Instrument = { id: string; name?: string; kind?: 'header' | 'on' | 'off'; linked?: boolean; selected?: boolean };

const instruments: Instrument[] = [
  { id: '00', name: '-- dblue sounds --', kind: 'header' },
  { id: '01', name: 'dblue sub hit', kind: 'on' },
  { id: '02', name: 'dblue rn-808 kit', kind: 'on', linked: true },
  { id: '03', name: 'dblue neuro bass', kind: 'on', linked: true },
  { id: '04', name: 'dblue clap verb', kind: 'on' },
  { id: '05', name: 'dblue ambient 1', kind: 'off' },
  { id: '06', name: 'dblue ambient 2', kind: 'off' },
  { id: '07', name: 'dblue zap', kind: 'off' },
  { id: '08', name: 'dblue saw square arp', kind: 'on', linked: true, selected: true },
  { id: '09', name: 'dblue air keys (grabbed from ..', kind: 'off' },
  { id: '0A' },
  { id: '0B', name: '-- danoise sounds --', kind: 'header' },
  { id: '0C', name: 'danoise turbine', kind: 'off' },
];

const songs = [
  'DemoSong - Daed - Bears.xrns',
  'DemoSong - Danoise - LFO.xrns',
  'DemoSong - DBlue - Tension.xrns',
  'DemoSong - Hunz - Soon Soon.xrns',
  'DemoSong - It-Alien - ThePath 2.00..',
  'DemoSong - Medievil Music - Acces..',
  'DemoSong - Phobium - Abrupt.xrns',
  'DemoSong - Sunjammer - I Under..',
  'Tutorial - Beat Slicing.xrns',
  'Tutorial - Beat Synced Wobbles.xrns',
  'Tutorial - Cross-Track Routing.xrns',
  'Tutorial - Delay Column (Humanize)...',
  'Tutorial - Delay Column (SubLines)...',
  'Tutorial - Ducking (Sidechaining).xrns',
  'Tutorial - Glide & Pitch.xrns',
  'Tutorial - Lines Per Beat.xrns',
  'Tutorial - Maybe Melodies.xrns',
  'Tutorial - Meta Mixer.xrns',
];

function InstrumentList() {
  return (
    <div className="relative flex h-[122px] border border-[#2c2c2c] bg-[#161615]">
      <svg viewBox="0 0 175 120" className="absolute inset-0 h-full w-full" fill="#3c3c3b">
        <path d="M92 25L120 42Q122 44 119 48L96 80Q92 86 88 82L78 76Q74 60 84 44Z" />
        <path d="M54 66Q66 56 80 60L76 96H62Q56 88 54 66Z" fill="#242423" />
      </svg>
      <div className="relative flex w-[13px] flex-col gap-[2px] p-px">
        <Btn label="Remove instrument" className="h-[10px] w-[10px]">−</Btn>
        <Btn label="Add instrument" className="h-[10px] w-[10px]">+</Btn>
        <Btn label="Keyboard split" className="mt-auto h-[10px] w-[10px]">
          <svg viewBox="0 0 8 8" className="h-[8px] w-[8px]" fill="none" stroke="currentColor">
            <path d="M4 0V8M0 4H2M6 4H8M2 2V6M6 2V6" />
          </svg>
        </Btn>
      </div>
      <ul className="relative grid min-w-0 flex-1 auto-rows-fr">
        {instruments.map(({ id, name, kind, linked, selected }) => (
          <li key={id} className={cn('flex items-center', selected ? 'bg-[#70706f] text-white' : 'text-[#dedede]')}>
            <span className={cn('w-[12px] text-[#aaa]', selected && 'text-white')}>{id}</span>
            <span className="h-full w-px bg-[#555]" />
            {kind === 'on' || kind === 'off' ? (
              <Check label={name ?? id} className={cn('mx-[2px]', kind === 'on' ? 'bg-[#d9602a]' : 'bg-[#333]')} />
            ) : (
              <span className="w-[11px]" />
            )}
            {linked && (
              <svg viewBox="0 0 9 6" className="mr-[2px] h-[6px] w-[9px]" fill="none" stroke="currentColor">
                <path d="M4 1H1V5H4M5 1H8V5H5M3 3H6" />
              </svg>
            )}
            <span className={cn('flex-1 whitespace-nowrap', kind === 'header' && 'text-[#aaa]')}>{name}</span>
            {selected && <GridIcon className="mr-1 h-[6px] w-[6px] text-[#bbb]" />}
            {(kind === 'on' || kind === 'off') && <WaveIcon className="mr-[3px] text-[#aaa]" />}
          </li>
        ))}
      </ul>
      <div className="relative mx-px h-[65px] w-[9px] rounded-[1px] bg-[#555554]" />
    </div>
  );
}

function RightPanel() {
  return (
    <section className="flex w-[186px] shrink-0 flex-col border-l-[3px] border-[#353534] bg-[#4c4c4b] pl-[2px] pr-1 pt-[6px]">
      <InstrumentList />
      <div className="mt-1 flex h-[13px] items-center gap-[3px]">
        <h2 className="flex-1 text-[#eee]">Instrument Properties</h2>
        <Btn label="Instrument options" className="h-[11px] w-[11px]">
          <svg viewBox="0 0 8 8" className="h-[8px] w-[8px]" stroke="currentColor" strokeWidth="1.400">
            <path d="M0 1H8M0 4H8M0 7H8" />
          </svg>
        </Btn>
        <Btn label="Collapse properties" on className="h-[11px] w-[11px]"><Tri dir="up" /></Btn>
      </div>
      <div className="mt-[3px] flex gap-[2px]">
        <Select label="Plugin" value="No plugin loaded" className="h-[11px] flex-1" />
        <Btn className="h-[11px] w-[25px] text-[#999]">Editor</Btn>
      </div>
      <Spin label="Program" value="No programs available" dim className="mt-px h-[12px]" />
      <div className="mt-[6px] grid grid-cols-4 gap-x-[4px] gap-y-[3px] text-[#a8a8a8]">
        {Array.from({ length: 8 }, (_, i) => (
          <div key={i} className="flex h-[17px] flex-col justify-between">
            <Slider label={`Macro ${i + 1}`} value={0} className="w-full" />
            N/A
          </div>
        ))}
      </div>
      <div className="mt-1 flex h-[14px] justify-between">
        <div className="flex w-[115px] items-center rounded-[2px] border border-[#2a2a2a] bg-[#161615]">
          <button aria-label="Previous" className="flex h-full w-[11px] items-center justify-center bg-[#4a4a49] text-[#888]"><Tri dir="left" /></button>
          <button className="ml-px h-full w-[14px] border border-[#1fcf8f] bg-[#1aa878] text-[#d8ffe8]">01</button>
          <button className="ml-[2px] h-full w-[14px] border border-[#3f9f7a] bg-[#103c2e] text-[#cfe8dc]">02</button>
          <button aria-label="Next" className="ml-auto flex h-full w-[11px] items-center justify-center bg-[#4a4a49] text-[#888]"><Tri dir="right" /></button>
        </div>
        <div className="flex">
          <Btn className="w-[18px]">Off</Btn>
          <Btn on className="w-[19px] rounded-none">Prg</Btn>
          <Btn className="w-[22px]">Map</Btn>
        </div>
      </div>
      <div className="mt-[5px] h-px bg-[#383837]" />
      <div className="mt-1 grid h-[12px] grid-cols-4">
        {['Songs', 'Instr.', 'Samples', 'Other'].map((tab, i) => (
          <Btn key={tab} on={i === 0} className="rounded-none">{tab}</Btn>
        ))}
      </div>
      <div className="mt-[3px] flex h-[12px] items-center justify-between text-[#a2a2a2]">
        <span className="whitespace-nowrap">/.../Renoise/XRenoise/Resources/Library/Songs/</span>
        <Btn label="Parent folder" className="h-[11px] w-[11px]">
          <svg viewBox="0 0 8 8" className="h-[7px] w-[7px]" fill="currentColor">
            <path d="M4 0L7.500 4H5.200V8H2.800V4H0.500z" />
          </svg>
        </Btn>
      </div>
      <div className="mt-[3px] h-px bg-[#383837]" />
      <div className="mt-1 flex h-[177px] border border-[#2c2c2c] bg-[#161615]">
        <div className="flex w-[14px] flex-col gap-[3px] p-[2px]">
          <Btn label="Search" className="h-[10px] w-[10px]">
            <svg viewBox="0 0 8 8" className="h-[8px] w-[8px]" fill="none" stroke="currentColor" strokeWidth="1.200">
              <circle cx="3.500" cy="3.500" r="2.500" />
              <path d="M5.500 5.500L8 8" />
            </svg>
          </Btn>
          <Btn label="Filter" className="h-[10px] w-[10px]">
            <svg viewBox="0 0 8 6" className="h-[6px] w-[8px]" fill="currentColor">
              <path d="M0 1h3v2H0zM5 1h3v2H5zM2.500 4h3L4 6z" />
            </svg>
          </Btn>
        </div>
        <ul className="grid min-w-0 flex-1 auto-rows-fr text-[#e2e2e2]">
          <li className="flex items-center gap-1 pl-px">
            <svg viewBox="0 0 10 8" className="h-[7px] w-[9px]" fill="#b9501c">
              <path d="M0 1h4l1 1h5v6H0z" />
            </svg>
            ..
          </li>
          {songs.map((song) => (
            <li key={song} className="flex items-center whitespace-nowrap">
              <svg viewBox="0 0 5 7" className="h-[6px] w-[5px] shrink-0" fill="none" stroke="#aaa">
                <path d="M1 0.800L4.200 3.500L1 6.200Z" />
              </svg>
              <span className="mx-[3px] flex"><NoteIcon /></span>
              {song}
            </li>
          ))}
        </ul>
        <div className="mx-px h-[166px] w-[9px] rounded-[1px] bg-[#555554]" />
      </div>
      <div className="mt-[6px] flex h-[12px] items-center gap-[2px]">
        <input
          aria-label="Song name"
          defaultValue="DemoSong - DBlue - Tension"
          className="h-full min-w-0 flex-1 rounded-[2px] border border-[#222] bg-[#161615] text-[#e2e2e2] outline-none"
        />
        <Btn className="h-[12px] w-[31px]">Save</Btn>
        <Btn className="h-[12px] w-[31px]">Render</Btn>
      </div>
    </section>
  );
}

function SideStrip() {
  const icons = [
    'M1 7L7 1',
    'M1 4L2 2H6L7 4V6.500H1ZM1 4.500H7',
    'M0.500 4L4 0.500L7.500 4H6.500V7.500H5V5H3V7.500H1.500V4Z',
    'M4 0.500L5.500 2L5 4.500L7 7.500H1L3 4.500L2.500 2Z',
    'M1 0.500V7.500M3.500 0.500V7.500M6 2.500V7.500',
  ];
  return (
    <div className="flex flex-1 flex-col border-l-4 border-[#353534] bg-[#484847]">
      <div className="flex h-[34px] flex-col items-center gap-[3px] bg-[#353534] pt-[5px]">
        <Btn label="Show instruments" on className="h-[11px] w-[11px]"><Tri dir="right" /></Btn>
        <Btn label="Show list" on className="h-[11px] w-[11px]">
          <svg viewBox="0 0 8 8" className="h-[7px] w-[7px]" stroke="currentColor">
            <path d="M0 1.500H2M3 1.500H8M0 4H2M3 4H8M0 6.500H2M3 6.500H8" />
          </svg>
        </Btn>
      </div>
      <div className="mt-[209px] flex flex-col items-center gap-[2px]">
        {[1, 2, 3, 4].map((n) => (
          <button key={n} className="h-[11px] w-[11px] border border-[#333] bg-[#555554] leading-[9px] text-[#888]">{n}</button>
        ))}
      </div>
      <div className="mt-[3px] h-px bg-[#383837]" />
      <div className="mt-1 flex flex-col items-center gap-[2px]">
        {icons.map((d, i) => (
          <Btn key={i} label={`View ${i + 1}`} className="h-[11px] w-[11px] rounded-none">
            <svg viewBox="0 0 8 8" className="h-[8px] w-[8px]" fill={i === 2 || i === 3 ? 'currentColor' : 'none'} stroke="currentColor" strokeWidth={i === 4 ? 1.6 : 1}>
              <path d={d} />
            </svg>
          </Btn>
        ))}
      </div>
    </div>
  );
}

function StatusBar() {
  return (
    <footer className="relative flex h-[18px] items-center overflow-hidden border-t-2 border-[#333332] bg-[#4c4c4b]">
      <div className="flex h-full w-[97px] items-center bg-[#3e3e3d] pl-[2px]">
        <Select label="Track" value="Mst: Mst" arrows className="h-[12px] w-[92px]" />
      </div>
      <p className="pl-1 font-bold text-white">Hold down modifiers: SHIFT to extend, ALT for more granular selections.</p>
      <span className="absolute right-[21px] top-0 text-[15px] font-bold leading-[16px] text-[#9a9a99]">renoise</span>
      <span className="absolute right-[7px] top-[5px] text-[9px] leading-[10px] text-black [font-family:'Liberation_Sans',sans-serif]">wsxdn.com</span>
    </footer>
  );
}

export default function App() {
  return (
    <div className="flex min-h-screen w-full flex-col bg-[#353534] [font-family:'DejaVu_Sans',sans-serif] text-[7px] leading-[9px]">
      <TopBar />
      <Transport />
      <main className="flex flex-1">
        <div className="flex min-w-0 flex-1 flex-col">
          <ModeTabs />
          <Spectrum />
          <div className="mt-[2px] flex flex-1">
            <SamplesPanel />
            <div className="ml-[3px] flex min-w-0 flex-1 flex-col bg-[#4c4c4b]">
              <InstrumentToolbar />
              <EditorTabs />
              <PhraseEditor />
              <PhraseControls />
              <KeyboardRow />
            </div>
          </div>
        </div>
        <div className="flex w-[206px] shrink-0">
          <RightPanel />
          <SideStrip />
        </div>
      </main>
      <StatusBar />
    </div>
  );
}
